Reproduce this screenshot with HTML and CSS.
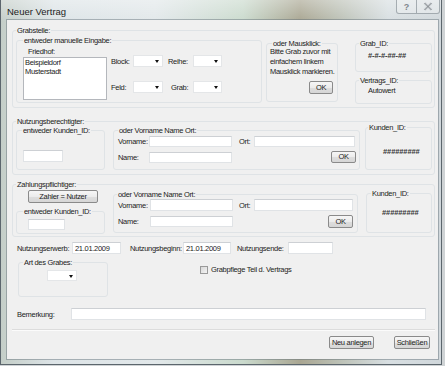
FILE: index.html
```html
<!DOCTYPE html>
<html>
<head>
<meta charset="utf-8">
<title>Neuer Vertrag</title>
<link rel="stylesheet" href="styles.css">
</head>
<body>
<div class="win">
  <div class="titlebar">
    <span class="title">Neuer Vertrag</span>
    <div class="tbtns">
      <span class="tb tb-help">?</span>
      <span class="tb tb-close"><svg width="10" height="9" viewBox="0 0 10 9"><path d="M1.5 1 L8.5 8 M8.5 1 L1.5 8" stroke="#d4d8dc" stroke-width="3"/><path d="M1.5 1 L8.5 8 M8.5 1 L1.5 8" stroke="#7c8186" stroke-width="1"/></svg></span>
    </div>
  </div>
  <div class="client">
    <div class="group gA">
      <div class="gl">Grabstelle:</div>
      <div class="grow">
        <div class="group bM">
          <div class="gl gl-m">entweder manuelle Eingabe:</div>
          <div class="friedhof">Friedhof:</div>
          <div class="m-row">
            <div class="listbox"><div class="li">Beispieldorf</div><div class="li">Musterstadt</div></div>
            <div class="lage">
              <span class="lbl">Block:</span><span class="combo w30"></span><span class="lbl pl5">Reihe:</span><span class="combo w29"></span>
              <span class="lbl">Feld:</span><span class="combo w30"></span><span class="lbl pl8">Grab:</span><span class="combo w29"></span>
            </div>
          </div>
        </div>
        <div class="group bO">
          <div class="gl gl-o">oder Mausklick:</div>
          <div class="otext">Bitte Grab zuvor mit<br>einfachem linkem<br>Mausklick markieren.</div>
          <button class="btn okA">OK</button>
        </div>
        <div class="idcol">
          <div class="group bG"><div class="gl">Grab_ID:</div><div class="val gval">#-#-#-##-##</div></div>
          <div class="group bV"><div class="gl">Vertrags_ID:</div><div class="val vval">Autowert</div></div>
        </div>
      </div>
    </div>

    <div class="group gB">
      <div class="gl">Nutzungsberechtigter:</div>
      <div class="grow">
        <div class="group bK">
          <div class="gl gl-k">entweder Kunden_ID:</div>
          <input class="tx kid" type="text">
        </div>
        <div class="group bN">
          <div class="gl gl-n">oder Vorname Name Ort:</div>
          <div class="nrow r1">
            <span class="lbl l31">Vorname:</span><input class="tx w83 h11" type="text">
            <span class="lbl ort">Ort:</span><input class="tx w101 h11" type="text">
          </div>
          <div class="nrow r2">
            <span class="lbl l31">Name:</span><input class="tx w83 h11" type="text">
            <button class="btn okB">OK</button>
          </div>
        </div>
        <div class="group bKI">
          <div class="gl gl-ki">Kunden_ID:</div>
          <div class="val hB">#########</div>
        </div>
      </div>
    </div>

    <div class="group gC">
      <div class="gl">Zahlungspflichtiger:</div>
      <div class="grow">
        <div class="cleft">
          <button class="btn zahler">Zahler = Nutzer</button>
          <div class="group bKc">
            <div class="gl gl-kc">entweder Kunden_ID:</div>
            <input class="tx kidc" type="text">
          </div>
        </div>
        <div class="group bNc">
          <div class="gl gl-nc">oder Vorname Name Ort:</div>
          <div class="nrow r1c">
            <span class="lbl l32">Vorname:</span><input class="tx w83 h12" type="text">
            <span class="lbl ortc">Ort:</span><input class="tx w99 h12" type="text">
          </div>
          <div class="nrow r2c">
            <span class="lbl l32">Name:</span><input class="tx w83 h11" type="text">
            <button class="btn okC">OK</button>
          </div>
        </div>
        <div class="group bKIc">
          <div class="gl gl-kic">Kunden_ID:</div>
          <div class="val hC">#########</div>
        </div>
      </div>
    </div>

    <div class="drow">
      <span class="lbl l55">Nutzungserwerb:</span><input class="tx w49 h12 dt" type="text" value="21.01.2009">
      <span class="lbl l53 ml9">Nutzungsbeginn:</span><input class="tx w48 h12 dt" type="text" value="21.01.2009">
      <span class="lbl l51 ml6">Nutzungsende:</span><input class="tx w45 h12 dt" type="text">
    </div>

    <div class="mrow">
      <div class="group bArt">
        <div class="gl gl-art">Art des Grabes:</div>
        <span class="combo w30 artc"></span>
      </div>
      <label class="chkrow"><span class="chk"></span><span class="chktxt">Grabpflege Teil d. Vertrags</span></label>
    </div>

    <div class="brow">
      <span class="lbl l54">Bemerkung:</span><input class="tx w355 h12" type="text">
    </div>

    <div class="sep"></div>

    <div class="btns">
      <button class="btn neu">Neu anlegen</button>
      <button class="btn schl">Schließen</button>
    </div>
  </div>
</div>
</body>
</html>
```

FILE: styles.css
```css
* { box-sizing: border-box; }
html, body { margin: 0; padding: 0; }
body {
  width: 445px;
  height: 366px;
  overflow: hidden;
  background: #cfd3d5;
  font-family: "Liberation Sans", Arial, sans-serif;
  font-size: 7.5px;
  letter-spacing: -0.3px;
  color: #222;
}

/* window frame */
.win {
  width: 442px;
  height: 365px;
  padding: 0 3px 5px 6px;
  border: 1px solid #5c666d;
  border-top: 0;
  background:
    linear-gradient(180deg, rgba(255,255,255,0.35), rgba(255,255,255,0) 22px),
    linear-gradient(90deg, #c4cec8 0%, #dde4e7 12%, #e2e8ea 35%, #cadacd 55%, #a9a692 68%, #bcc1b6 77%, #d8dfe2 88%, #d0d7db 100%);
}
.titlebar {
  height: 20px;
  display: flex;
  align-items: flex-start;
}
.title {
  font-size: 9.5px;
  letter-spacing: 0;
  line-height: 13px;
  padding-top: 5px;
  color: #1c1c1c;
}
.tbtns {
  margin-left: auto;
  margin-right: -2px;
  display: flex;
}
.tb {
  height: 14px;
  display: flex;
  align-items: center;
  justify-content: center;
  border: 1px solid rgba(110,120,128,0.55);
  border-top: 0;
  background: rgba(255,255,255,0.25);
  color: #80868c;
  font-size: 9px;
  font-weight: bold;
  letter-spacing: 0;
}
.tb-help { width: 20px; border-right: 0; border-radius: 0 0 0 3px; }
.tb-close { width: 24px; border-radius: 0 0 3px 0; }

.client {
  width: 431px;
  height: 339px;
  background: #f0f0f0;
  box-shadow: 0 0 0 1px rgba(96,108,118,0.45);
  padding: 10px 0 0 5px;
}

/* group boxes */
.group {
  border: 1px solid #dfe3e6;
  border-radius: 3px;
}
.gl {
  display: table;
  margin: -5px 0 0 3px;
  padding: 0 1px;
  background: #f0f0f0;
  line-height: 9px;
  height: 9px;
  white-space: nowrap;
}
.grow { display: flex; align-items: flex-start; }
.lbl { white-space: nowrap; line-height: 9px; }

/* Grabstelle */
.gA { width: 423px; height: 78px; }
.bM { margin: 5px 0 0 3px; width: 246px; height: 63px; }
.gl-m { margin-left: 6px; }
.friedhof { margin: 2px 0 0 11px; line-height: 9px; }
.m-row { display: flex; margin: 1px 0 0 6px; }
.listbox {
  width: 84px;
  height: 43px;
  background: #fff;
  border: 1px solid #b4b7bc;
  padding: 0 1px;
}
.li { line-height: 9px; white-space: nowrap; }
.lage {
  display: grid;
  grid-template-columns: 22px 30px 30px 29px;
  grid-auto-rows: 12px;
  row-gap: 14px;
  align-items: center;
  margin: -2px 0 0 4px;
}
.pl5 { padding-left: 5px; }
.pl8 { padding-left: 8px; }
.combo {
  position: relative;
  display: block;
  height: 12px;
  background: #fff;
  border: 1px solid #e4e6e8;
}
.combo::after {
  content: "";
  position: absolute;
  right: 3px;
  top: 4px;
  border-left: 2.5px solid transparent;
  border-right: 2.5px solid transparent;
  border-top: 3px solid #111;
}
.w30 { width: 30px; }
.w29 { width: 29px; }

.bO { margin: 8px 0 0 4px; width: 72px; height: 59px; }
.gl-o { margin-left: 5px; }
.otext { margin: -1px 0 0 3px; line-height: 10px; white-space: nowrap; }

.btn {
  display: block;
  padding: 0;
  margin: 0;
  font-family: inherit;
  font-size: inherit;
  letter-spacing: inherit;
  color: #222;
  line-height: 11px;
  background: linear-gradient(180deg, #f6f6f6 0%, #ececec 50%, #dedede 51%, #d6d6d6 100%);
  border: 1px solid #8a8a8a;
  border-radius: 2px;
  text-align: center;
  white-space: nowrap;
}
.okA { margin: 4px 0 0 42px; width: 24px; height: 13px; }

.idcol { margin-left: 17px; width: 77px; display: flex; flex-direction: column; }
.bG { margin-top: 8px; height: 29px; }
.bV { margin-top: 8px; height: 24px; }
.val { line-height: 9px; white-space: nowrap; }
.gval { margin: 3px 0 0 12px; font-weight: bold; letter-spacing: -0.1px; color: #333; }
.vval { margin: 1px 0 0 12px; }

/* text inputs */
.tx {
  display: block;
  margin: 0;
  padding: 0 0 0 2px;
  background: #fff;
  border: 1px solid #e0e3e6;
  border-top-color: #cdd0d4;
  font-family: inherit;
  font-size: inherit;
  letter-spacing: inherit;
  color: #222;
  outline: none;
}
.h11 { height: 11px; }
.h12 { height: 12px; }
.w83 { width: 83px; }
.w101 { width: 101px; }
.w99 { width: 99px; }
.w49 { width: 49px; }
.w48 { width: 48px; }
.w45 { width: 45px; }
.w355 { width: 355px; }

/* Nutzungsberechtigter */
.gB { margin-top: 13px; width: 423px; height: 54px; }
.bK { margin: 4px 0 0 3px; width: 89px; height: 40px; }
.gl-k { margin-left: 5px; }
.kid { margin: 15px 0 0 6px; width: 40px; height: 12px; }
.bN { margin: 4px 0 0 8px; width: 247px; height: 40px; }
.gl-n { margin-left: 4px; }
.nrow { display: flex; align-items: center; margin-left: 4px; }
.r1 { margin-top: 1px; }
.r2 { margin-top: 4px; height: 12px; }
.l31 { width: 31px; }
.l32 { width: 32px; }
.ort { margin-left: 7px; width: 15px; }
.ortc { margin-left: 6px; width: 15px; }
.okB { margin-left: 99px; width: 25px; height: 12px; line-height: 10px; }
.bKI { margin: 1px 0 0 5px; width: 67px; height: 43px; }
.gl-ki { margin-left: 2px; }
.hB { margin: 15px 0 0 17px; font-weight: bold; letter-spacing: -0.1px; color: #333; }

/* Zahlungspflichtiger */
.gC { margin-top: 9px; width: 423px; height: 53px; }
.cleft { margin-left: 3px; width: 89px; display: flex; flex-direction: column; }
.zahler { margin: 1px 0 0 12px; width: 70px; height: 13px; }
.bKc { margin-top: 8px; height: 23px; }
.gl-kc { margin-left: 6px; }
.kidc { margin: 3px 0 0 11px; width: 37px; height: 11px; }
.bNc { margin: 5px 0 0 8px; width: 245px; height: 39px; }
.gl-nc { margin-left: 3px; }
.r1c { margin-top: 0; }
.r2c { margin-top: 4px; height: 13px; }
.okC { margin-left: 95px; width: 25px; height: 13px; }
.bKIc { margin: 4px 0 0 8px; width: 66px; height: 40px; }
.gl-kic { margin-left: 4px; }
.hC { margin: 10px 0 0 15px; font-weight: bold; letter-spacing: -0.1px; color: #333; }

/* dates */
.drow { display: flex; align-items: center; margin: 5px 0 0 5px; height: 12px; }
.l55 { width: 55px; }
.l53 { width: 53px; }
.l51 { width: 51px; }
.l54 { width: 54px; }
.ml9 { margin-left: 9px; }
.ml6 { margin-left: 6px; }
.dt { padding-left: 2px; }

/* Art des Grabes + checkbox */
.mrow { display: flex; align-items: flex-start; margin-top: 8px; }
.bArt { margin-left: 6px; width: 90px; height: 35px; }
.gl-art { margin-left: 4px; }
.artc { margin: 3px 0 0 28px; height: 11px; }
.artc::after { top: 3.5px; }
.chkrow { display: flex; align-items: center; margin: 3px 0 0 92px; }
.chk {
  display: block;
  width: 8px;
  height: 8px;
  border: 1px solid #9a9a9a;
  background: linear-gradient(135deg, #d8d8d8, #f4f4f4);
}
.chktxt { margin-left: 3px; line-height: 9px; white-space: nowrap; }

/* Bemerkung */
.brow { display: flex; align-items: center; margin: 11px 0 0 5px; height: 12px; }

.sep {
  margin-top: 9px;
  width: 423px;
  height: 2px;
  border-top: 1px solid #dcdcdc;
  border-bottom: 1px solid #fbfbfb;
}
.btns {
  display: flex;
  justify-content: flex-end;
  gap: 20px;
  margin: 5px 8px 0 0;
}
.neu { width: 45px; height: 13px; }
.schl { width: 36px; height: 13px; }
```
